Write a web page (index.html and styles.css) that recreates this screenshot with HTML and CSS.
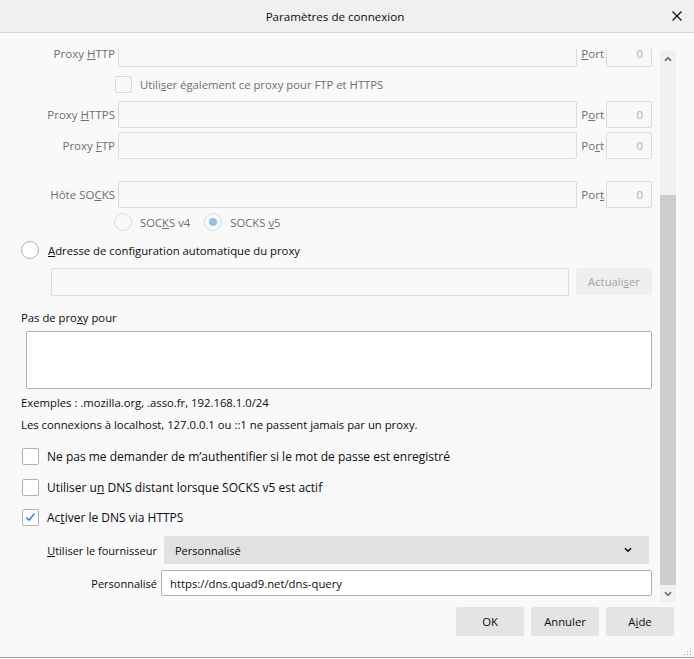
FILE: index.html
```html
<!DOCTYPE html>
<html lang="fr">
<head>
<meta charset="utf-8">
<title>Paramètres de connexion</title>
<link rel="stylesheet" href="styles.css">
</head>
<body>
<div class="dialog">
  <header class="titlebar">
    <span class="title">Paramètres de connexion</span>
    <svg class="close" width="12" height="12" viewBox="0 0 12 12"><path d="M1.5 1.5 L10.5 10.5 M10.5 1.5 L1.5 10.5" stroke="#0c0c0d" stroke-width="1.2" fill="none"/></svg>
  </header>

  <div class="body">
    <div class="viewport">
      <div class="content">
        <div class="prow">
          <span class="plabel">Proxy <u>H</u>TTP</span>
          <span class="field dis"></span>
          <span class="portlabel"><u>P</u>ort</span>
          <span class="port">0</span>
        </div>
        <div class="cbrow">
          <span class="checkbox dis"></span>
          <span class="distext">Utili<u>s</u>er également ce proxy pour FTP et HTTPS</span>
        </div>
        <div class="prow https">
          <span class="plabel">Proxy <u>H</u>TTPS</span>
          <span class="field dis"></span>
          <span class="portlabel">P<u>o</u>rt</span>
          <span class="port">0</span>
        </div>
        <div class="prow socks-gap">
          <span class="plabel">Proxy <u>F</u>TP</span>
          <span class="field dis"></span>
          <span class="portlabel">Po<u>r</u>t</span>
          <span class="port">0</span>
        </div>
        <div class="prow">
          <span class="plabel">Hôte SO<u>C</u>KS</span>
          <span class="field dis"></span>
          <span class="portlabel">Por<u>t</u></span>
          <span class="port">0</span>
        </div>
        <div class="radiorow">
          <span class="radio dis"></span><span class="distext">SOC<u>K</u>S v4</span>
          <span class="radio dis on"></span><span class="distext">SOCKS <u>v</u>5</span>
        </div>

        <div class="autorow">
          <span class="radio"></span><span><u>A</u>dresse de configuration automatique du proxy</span>
        </div>
        <div class="autofield">
          <span class="field dis"></span>
          <span class="btn dis">Actuali<u>s</u>er</span>
        </div>

        <div class="noproxy">Pas de pro<u>x</u>y pour</div>
        <div class="textarea"></div>
        <div class="hint first">Exemples : .mozilla.org, .asso.fr, 192.168.1.0/24</div>
        <div class="hint">Les connexions à localhost, 127.0.0.1 ou ::1 ne passent jamais par un proxy.</div>

        <div class="check c1"><span class="checkbox"></span><span>Ne pas me demander de m’authentifier si le mot de passe est enregistré</span></div>
        <div class="check c2"><span class="checkbox"></span><span>Utiliser u<u>n</u> DNS distant lorsque SOCKS v5 est actif</span></div>
        <div class="check c3"><span class="checkbox">
          <svg width="16" height="16" viewBox="0 0 16 16"><path d="M3.5 8.5 L6.5 11.5 L12 4.5" stroke="#0a84ff" stroke-width="1.5" fill="none"/></svg>
        </span><span>Ac<u>t</u>iver le DNS via HTTPS</span></div>

        <div class="doh">
          <span class="dlabel"><u>U</u>tiliser le fournisseur</span>
          <div class="select">
            <span>Personnalisé</span>
            <svg width="8" height="6" viewBox="0 0 8 6"><path d="M1 1.2 L4 4.2 L7 1.2" stroke="#0c0c0d" stroke-width="1.6" fill="none"/></svg>
          </div>
          <span class="dlabel">Personnalisé</span>
          <span class="field url">https://dns.quad9.net/dns-query</span>
        </div>
      </div>
    </div>
    <div class="scrollbar">
      <span class="arrow"><svg width="8" height="6" viewBox="0 0 8 6"><path d="M1 4.8 L4 1.8 L7 4.8" stroke="#606060" stroke-width="1.6" fill="none"/></svg></span>
      <span class="track"><span class="thumb"></span></span>
      <span class="arrow"><svg width="8" height="6" viewBox="0 0 8 6"><path d="M1 1.2 L4 4.2 L7 1.2" stroke="#606060" stroke-width="1.6" fill="none"/></svg></span>
    </div>
  </div>

  <footer class="footer">
    <span class="btn">OK</span>
    <span class="btn">Annuler</span>
    <span class="btn">A<u>i</u>de</span>
  </footer>
  <svg class="grip" width="8" height="8" viewBox="0 0 8 8">
    <rect x="6" y="0" width="1" height="1" fill="#a0a0a0"/>
    <rect x="3" y="3" width="1" height="1" fill="#a0a0a0"/>
    <rect x="6" y="3" width="1" height="1" fill="#a0a0a0"/>
    <rect x="0" y="6" width="1" height="1" fill="#a0a0a0"/>
    <rect x="3" y="6" width="1" height="1" fill="#a0a0a0"/>
    <rect x="6" y="6" width="1" height="1" fill="#a0a0a0"/>
  </svg>
</div>
</body>
</html>
```

FILE: styles.css
```css
* { box-sizing: border-box; }
html, body { margin: 0; padding: 0; }
body {
  font-family: "Segoe UI", "Open Sans", "Noto Sans", sans-serif;
  font-size: 11.3px;
  color: #0c0c0d;
  background: #f9f9fa;
}
u { text-decoration: underline; text-underline-offset: 1px; }

.dialog {
  position: relative;
  width: 694px;
  height: 658px;
  background: #f9f9fa;
  border-bottom: 1px solid #9a9a9a;
  display: flex;
  flex-direction: column;
}

.titlebar {
  height: 33px;
  flex: none;
  background: #f0f0f0;
  border-bottom: 1px solid #d6d6d6;
  display: flex;
  align-items: center;
  justify-content: center;
  padding-right: 24px;
  position: relative;
}
.title { font-size: 11.6px; font-weight: 400; color: #0c0c0d; }
.close { position: absolute; right: 11px; top: 10px; }

.body {
  margin-top: 16px;
  height: 553px;
  flex: none;
  display: flex;
}
.viewport {
  flex: 1;
  overflow: hidden;
}
.content {
  margin-top: -9px;
  padding: 0 4px 0 21px;
}

/* manual proxy rows */
.prow {
  display: flex;
  align-items: center;
  height: 27px;
  margin-bottom: 3px;
}
.prow.https { margin-bottom: 4px; }
.prow.socks-gap { margin-bottom: 22px; }
.plabel {
  width: 94px;
  margin-right: 3px;
  text-align: right;
  color: #6e6e72;
  white-space: nowrap;
  font-size: 11.5px;
}
.field {
  display: flex;
  align-items: center;
  height: 100%;
  border: 1px solid #b1b1b3;
  background: #fff;
  border-radius: 2px;
}
.field.dis { background: #f9f9fa; border-color: #dadadc; }
.prow .field { flex: 1; }
.portlabel { margin: 0 2px 0 4px; color: #6e6e72; font-size: 11.5px; }
.port {
  width: 46px;
  height: 100%;
  border: 1px solid #dadadc;
  border-radius: 2px;
  display: flex;
  align-items: center;
  justify-content: flex-end;
  padding-right: 8px;
  color: #b0a89e;
}
.distext { color: #6e6e72; }

.cbrow {
  height: 28px;
  margin-bottom: 3px;
  display: flex;
  align-items: center;
  padding-left: 94px;
  gap: 8px;
}

.checkbox {
  width: 17px;
  height: 17px;
  flex: none;
  border: 1px solid #b1b1b3;
  border-radius: 2px;
  background: #fff;
  display: flex;
  align-items: center;
  justify-content: center;
}
.checkbox.dis { border-color: #d7d7db; background: #f9f9fa; }

.radio {
  width: 18px;
  height: 18px;
  flex: none;
  border: 1px solid #b1b1b3;
  border-radius: 50%;
  background: #fff;
  display: flex;
  align-items: center;
  justify-content: center;
}
.radio.dis { border-color: #dadadc; background: #f9f9fa; }
.radio.on::after {
  content: "";
  width: 8px;
  height: 8px;
  border-radius: 50%;
  background: #8cc4ea;
}

.radiorow {
  height: 22px;
  display: flex;
  align-items: center;
  padding-left: 93px;
}
.radiorow .radio + span { margin-left: 8px; margin-right: 14px; }

.autorow {
  margin-top: 8px;
  height: 18px;
  display: flex;
  align-items: center;
  gap: 9px;
}
.autofield {
  margin-top: 9px;
  height: 28px;
  display: flex;
  gap: 7px;
  padding-left: 30px;
}
.autofield .field { flex: 1; }

.btn {
  display: flex;
  align-items: center;
  justify-content: center;
  background: #e4e4e5;
  border-radius: 2px;
  height: 28px;
  font-size: 11.3px;
}
.btn.dis { width: 76px; height: 27px; background: #efeff0; color: #a4a4a6; }

.noproxy {
  margin-top: 14px;
  line-height: 16px;
}
.textarea {
  margin: 5px 0 0 5px;
  height: 58px;
  background: #fff;
  border: 1px solid #b1b1b3;
  border-radius: 2px;
}
.hint { line-height: 16px; margin-top: 6px; }
.hint.first { margin-top: 6px; }

.check {
  height: 18px;
  display: flex;
  align-items: center;
  gap: 8px;
  padding-left: 1px;
  font-size: 12px;
}
.check.c1 { margin-top: 14px; }
.check.c2 { margin-top: 13px; }
.check.c3 { margin-top: 12px; }

.doh {
  margin-top: 10px;
  display: grid;
  grid-template-columns: 140px 1fr;
  grid-template-rows: 28px 26px;
  row-gap: 6px;
  align-items: center;
}
.dlabel { text-align: right; padding-right: 4px; white-space: nowrap; font-size: 11px; }
.select {
  height: 28px;
  margin: 0 3px;
  background: #e1e1e2;
  border-radius: 2px;
  display: flex;
  align-items: center;
  justify-content: space-between;
  padding: 0 17px 0 11px;
  font-size: 11px;
}
.field.url { padding-left: 8px; font-size: 11.3px; }

.scrollbar {
  width: 16px;
  margin: 1px 18px 0 4px;
  background: #f0f0f0;
  display: flex;
  flex-direction: column;
}
.arrow {
  height: 17px;
  flex: none;
  display: flex;
  align-items: center;
  justify-content: center;
}
.track { flex: 1; display: flex; flex-direction: column; justify-content: flex-end; }
.thumb { height: 390px; background: #cdcdcd; }

.footer {
  flex: none;
  display: flex;
  justify-content: flex-end;
  gap: 7px;
  padding: 5px 20px 0 0;
}
.footer .btn { width: 68px; height: 29px; }

.grip { position: absolute; right: 2px; bottom: 1px; }
```
